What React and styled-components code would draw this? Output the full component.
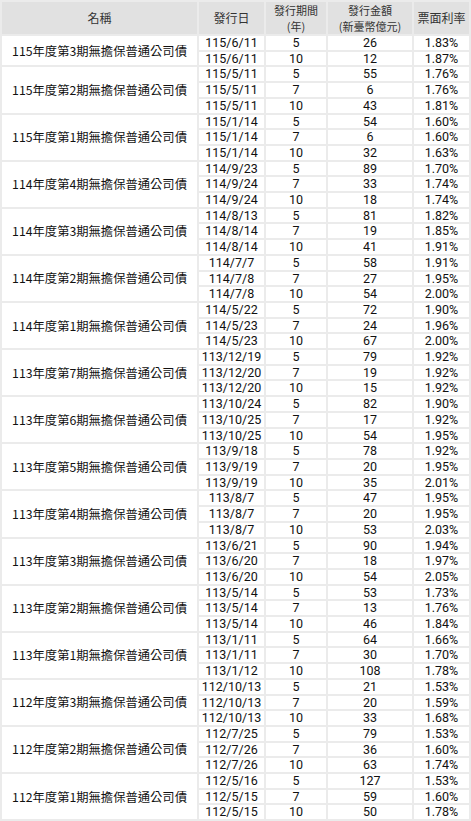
import React from "react";
import styled, { createGlobalStyle } from "styled-components";

const GlobalStyle = createGlobalStyle`
  html, body {
    margin: 0;
    padding: 0;
    background: #fff;
  }
  body {
    font-family: "Noto Sans CJK TC", "Noto Sans", sans-serif;
  }
`;

const Table = styled.table`
  width: 471px;
  table-layout: fixed;
  border-collapse: separate;
  border-spacing: 2px;
  background-color: #ebebeb;
  color: #111;
`;

const HeadCell = styled.th`
  height: 32px;
  padding: 0;
  background-color: #e1e1e1;
  color: #333;
  font-family: "Noto Sans CJK TC", sans-serif;
  font-size: ${(p) => (p.$twoLine ? "11px" : "12px")};
  font-weight: normal;
  line-height: 16px;
  text-align: center;
  vertical-align: middle;
`;

const Cell = styled.td`
  height: 13.71px;
  padding: 0;
  background-color: #fff;
  font-family: Roboto, "Liberation Sans", sans-serif;
  font-size: 12.5px;
  line-height: 13.71px;
  text-align: center;
  vertical-align: middle;
  white-space: nowrap;
`;

const NameCell = styled(Cell)`
  font-family: "Noto Sans CJK TC", sans-serif;
  font-size: 12.3px;
  line-height: 16px;
`;

const issues = [
  ["115年度第3期無擔保普通公司債", [["115/6/11", 5, 26, "1.83%"], ["115/6/11", 10, 12, "1.87%"]]],
  ["115年度第2期無擔保普通公司債", [["115/5/11", 5, 55, "1.76%"], ["115/5/11", 7, 6, "1.76%"], ["115/5/11", 10, 43, "1.81%"]]],
  ["115年度第1期無擔保普通公司債", [["115/1/14", 5, 54, "1.60%"], ["115/1/14", 7, 6, "1.60%"], ["115/1/14", 10, 32, "1.63%"]]],
  ["114年度第4期無擔保普通公司債", [["114/9/23", 5, 89, "1.70%"], ["114/9/24", 7, 33, "1.74%"], ["114/9/24", 10, 18, "1.74%"]]],
  ["114年度第3期無擔保普通公司債", [["114/8/13", 5, 81, "1.82%"], ["114/8/14", 7, 19, "1.85%"], ["114/8/14", 10, 41, "1.91%"]]],
  ["114年度第2期無擔保普通公司債", [["114/7/7", 5, 58, "1.91%"], ["114/7/8", 7, 27, "1.95%"], ["114/7/8", 10, 54, "2.00%"]]],
  ["114年度第1期無擔保普通公司債", [["114/5/22", 5, 72, "1.90%"], ["114/5/23", 7, 24, "1.96%"], ["114/5/23", 10, 67, "2.00%"]]],
  ["113年度第7期無擔保普通公司債", [["113/12/19", 5, 79, "1.92%"], ["113/12/20", 7, 19, "1.92%"], ["113/12/20", 10, 15, "1.92%"]]],
  ["113年度第6期無擔保普通公司債", [["113/10/24", 5, 82, "1.90%"], ["113/10/25", 7, 17, "1.92%"], ["113/10/25", 10, 54, "1.95%"]]],
  ["113年度第5期無擔保普通公司債", [["113/9/18", 5, 78, "1.92%"], ["113/9/19", 7, 20, "1.95%"], ["113/9/19", 10, 35, "2.01%"]]],
  ["113年度第4期無擔保普通公司債", [["113/8/7", 5, 47, "1.95%"], ["113/8/7", 7, 20, "1.95%"], ["113/8/7", 10, 53, "2.03%"]]],
  ["113年度第3期無擔保普通公司債", [["113/6/21", 5, 90, "1.94%"], ["113/6/20", 7, 18, "1.97%"], ["113/6/20", 10, 54, "2.05%"]]],
  ["113年度第2期無擔保普通公司債", [["113/5/14", 5, 53, "1.73%"], ["113/5/14", 7, 13, "1.76%"], ["113/5/14", 10, 46, "1.84%"]]],
  ["113年度第1期無擔保普通公司債", [["113/1/11", 5, 64, "1.66%"], ["113/1/11", 7, 30, "1.70%"], ["113/1/12", 10, 108, "1.78%"]]],
  ["112年度第3期無擔保普通公司債", [["112/10/13", 5, 21, "1.53%"], ["112/10/13", 7, 20, "1.59%"], ["112/10/13", 10, 33, "1.68%"]]],
  ["112年度第2期無擔保普通公司債", [["112/7/25", 5, 79, "1.53%"], ["112/7/26", 7, 36, "1.60%"], ["112/7/26", 10, 63, "1.74%"]]],
  ["112年度第1期無擔保普通公司債", [["112/5/16", 5, 127, "1.53%"], ["112/5/15", 7, 59, "1.60%"], ["112/5/15", 10, 50, "1.78%"]]],
];

export default function App() {
  return (
    <>
      <GlobalStyle />
      <Table>
        <colgroup>
          <col style={{ width: 195 }} />
          <col style={{ width: 65 }} />
          <col style={{ width: 60 }} />
          <col style={{ width: 84 }} />
          <col style={{ width: 55 }} />
        </colgroup>
        <thead>
          <tr>
            <HeadCell>名稱</HeadCell>
            <HeadCell>發行日</HeadCell>
            <HeadCell $twoLine>
              發行期間
              <br />
              (年)
            </HeadCell>
            <HeadCell $twoLine>
              發行金額
              <br />
              (新臺幣億元)
            </HeadCell>
            <HeadCell>票面利率</HeadCell>
          </tr>
        </thead>
        <tbody>
          {issues.map(([name, tranches]) =>
            tranches.map(([date, years, amount, rate], i) => (
              <tr key={name + i}>
                {i === 0 && <NameCell rowSpan={tranches.length}>{name}</NameCell>}
                <Cell>{date}</Cell>
                <Cell>{years}</Cell>
                <Cell>{amount}</Cell>
                <Cell>{rate}</Cell>
              </tr>
            ))
          )}
        </tbody>
      </Table>
    </>
  );
}
